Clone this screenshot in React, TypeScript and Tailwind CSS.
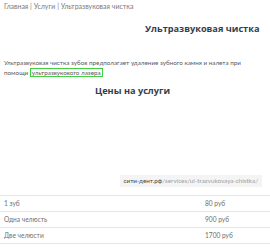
export default function App() {
  const rows = [
    { name: "1 зуб", price: "80 руб" },
    { name: "Одна челюсть", price: "900 руб" },
    { name: "Две челюсти", price: "1700 руб" },
  ];

  return (
    <div className="w-[270px] h-[250px] overflow-hidden bg-white font-['Lato',sans-serif]">
      {/* Breadcrumbs */}
      <div className="px-[4px] pt-[1px] text-[7px] leading-[10px] text-[#7a7a7a]">
        Главная | Услуги | Ультразвуковая чистка
      </div>

      <h1 className="mt-[12px] pl-[145px] text-[9.2px] leading-[12px] font-bold text-[#333e4c] font-['Open_Sans',sans-serif]">
        Ультразвуковая чистка
      </h1>

      <p className="mt-[23px] px-[4px] text-[6.3px] leading-[10px] text-[#5a5a5a]">
        Ультразвуковая чистка зубов предполагает удаление зубного камня и налета при
        <br />
        помощи{" "}
        <span className="border border-[#3fd13f] px-[1px]">ультразвукового лазера</span>
      </p>

      <h2 className="mt-[7px] pl-[95px] text-[9.2px] leading-[12px] font-bold text-[#333e4c] font-['Open_Sans',sans-serif]">
        Цены на услуги
      </h2>

      <div className="mt-[78px] flex justify-end pr-[8px]">
        <div className="bg-[#f4f4f4] px-[4px] py-[1px] text-[6.3px] leading-[10px] text-[#a0a0a0]">
          <span className="text-[#444]">сити-дент.рф</span>/services/ul-trazvukovaya-chistka/
        </div>
      </div>

      <div className="mt-[8px] border-t border-[#e6e6e6] text-[6.6px] text-[#707070]">
        {rows.map((r) => (
          <div key={r.name} className="flex h-[16px] items-center border-b border-[#e6e6e6]">
            <span className="w-[205px] pl-[4px]">{r.name}</span>
            <span>{r.price}</span>
          </div>
        ))}
      </div>
    </div>
  );
}
